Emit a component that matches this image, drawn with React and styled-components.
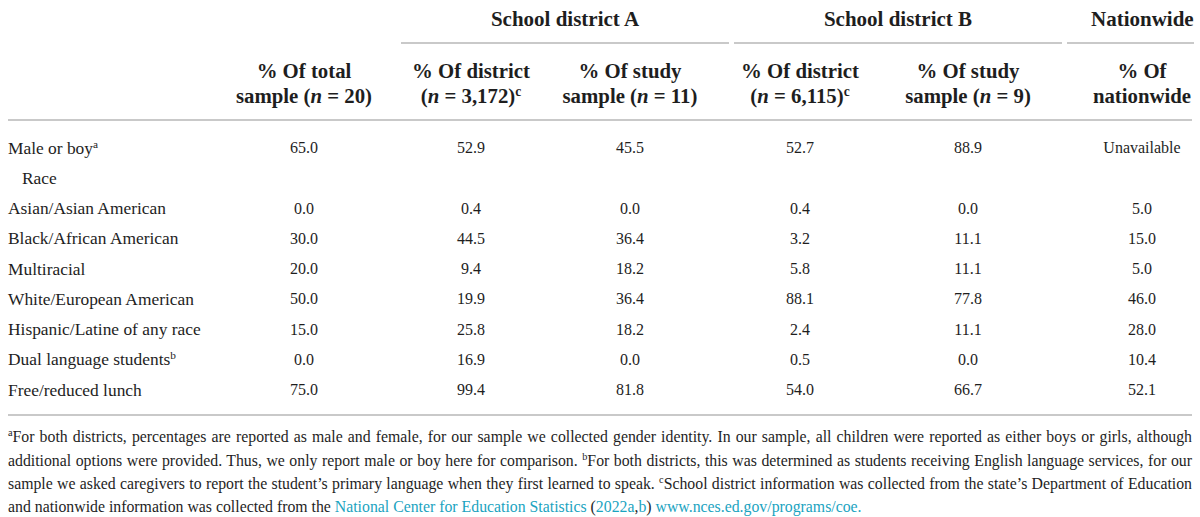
import React from "react";
import styled, { createGlobalStyle } from "styled-components";

const FONT = `"Liberation Serif", Tinos, "Times New Roman", "DejaVu Serif", serif`;

const Global = createGlobalStyle`
  html, body { margin: 0; padding: 0; background: #fff; }
  body { font-family: ${FONT}; color: #1e1e1e; }
`;

const LINE = "#c9c9c9";
const TEAL = "#1aa3bf";

const Page = styled.div`
  width: 1184px;
  padding: 0 8px;
  font-family: ${FONT};
`;

const GroupRow = styled.div`
  display: grid;
  grid-template-columns: 388px 328px 328px 1fr;
  column-gap: 5px;
`;

const GroupCell = styled.div`
  grid-column: ${(p) => p.$col};
  font-weight: bold;
  font-size: 21px;
  line-height: 24px;
  padding: 7px 0 11px ${(p) => p.$shift || 0}px;
  text-align: center;
  border-bottom: 2px solid ${LINE};
`;

const cols = "212px 168px 166px 152px 188px 148px 150px";

const HeadRow = styled.div`
  display: grid;
  grid-template-columns: ${cols};
  padding: 14px 0 11px;
  border-bottom: 2px solid ${LINE};
`;

const HeadCell = styled.div`
  font-weight: bold;
  font-size: 20.8px;
  line-height: 25px;
  text-align: center;
  padding-left: ${(p) => p.$pad || 0}px;
`;

const Body = styled.div`
  padding: 12px 0 9px;
  border-bottom: 2px solid ${LINE};
`;

const Row = styled.div`
  display: grid;
  grid-template-columns: ${cols};
  height: 30.25px;
  align-items: center;
  font-size: 16px;
`;

const Label = styled.div`
  font-size: 17.4px;
  padding-left: ${(p) => (p.$indent ? 14 : 0)}px;
  white-space: nowrap;
`;

const Value = styled.div`
  text-align: center;
  padding-left: ${(p) => p.$pad || 0}px;
`;

const Sup = styled.sup`
  font-size: 0.65em;
  line-height: 0;
  vertical-align: 0.55em;
`;

const Notes = styled.div`
  margin-top: 9px;
  font-size: 15.8px;
  line-height: 23.4px;
`;

const NoteLine = styled.div`
  text-align: ${(p) => (p.$last ? "left" : "justify")};
  text-align-last: ${(p) => (p.$last ? "left" : "justify")};
`;

const Link = styled.span`
  color: ${TEAL};
`;

const rows = [
  ["Male or boy", "a", ["65.0", "52.9", "45.5", "52.7", "88.9", "Unavailable"]],
  ["Race", null, null],
  ["Asian/Asian American", null, ["0.0", "0.4", "0.0", "0.4", "0.0", "5.0"]],
  ["Black/African American", null, ["30.0", "44.5", "36.4", "3.2", "11.1", "15.0"]],
  ["Multiracial", null, ["20.0", "9.4", "18.2", "5.8", "11.1", "5.0"]],
  ["White/European American", null, ["50.0", "19.9", "36.4", "88.1", "77.8", "46.0"]],
  ["Hispanic/Latine of any race", null, ["15.0", "25.8", "18.2", "2.4", "11.1", "28.0"]],
  ["Dual language students", "b", ["0.0", "16.9", "0.0", "0.5", "0.0", "10.4"]],
  ["Free/reduced lunch", null, ["75.0", "99.4", "81.8", "54.0", "66.7", "52.1"]],
];

const N = () => <i>n</i>;

export default function App() {
  return (
    <Page>
      <Global />
      <GroupRow>
        <GroupCell $col={2}>School district A</GroupCell>
        <GroupCell $col={3}>School district B</GroupCell>
        <GroupCell $col={4} $shift={24}>Nationwide</GroupCell>
      </GroupRow>
      <HeadRow>
        <div />
        <HeadCell>% Of total<br />sample (<N /> = 20)</HeadCell>
        <HeadCell>% Of district<br />(<N /> = 3,172)<Sup>c</Sup></HeadCell>
        <HeadCell>% Of study<br />sample (<N /> = 11)</HeadCell>
        <HeadCell>% Of district<br />(<N /> = 6,115)<Sup>c</Sup></HeadCell>
        <HeadCell>% Of study<br />sample (<N /> = 9)</HeadCell>
        <HeadCell $pad={50}>% Of<br />nationwide</HeadCell>
      </HeadRow>
      <Body>
        {rows.map(([label, sup, vals]) => (
          <Row key={label}>
            <Label $indent={!vals}>
              {label}
              {sup && <Sup>{sup}</Sup>}
            </Label>
            {vals &&
              vals.map((v, i) => (
                <Value key={i} $pad={i === 5 ? 50 : 0}>
                  {v}
                </Value>
              ))}
          </Row>
        ))}
      </Body>
      <Notes>
        <NoteLine>
          <Sup>a</Sup>For both districts, percentages are reported as male and female, for our sample we collected gender identity. In our sample, all children were reported as either boys or girls, although
        </NoteLine>
        <NoteLine>
          additional options were provided. Thus, we only report male or boy here for comparison. <Sup>b</Sup>For both districts, this was determined as students receiving English language services, for our
        </NoteLine>
        <NoteLine>
          sample we asked caregivers to report the student’s primary language when they first learned to speak. <Sup>c</Sup>School district information was collected from the state’s Department of Education
        </NoteLine>
        <NoteLine $last>
          and nationwide information was collected from the <Link>National Center for Education Statistics</Link> (<Link>2022a</Link>,<Link>b</Link>) <Link>www.nces.ed.gov/programs/coe.</Link>
        </NoteLine>
      </Notes>
    </Page>
  );
}
